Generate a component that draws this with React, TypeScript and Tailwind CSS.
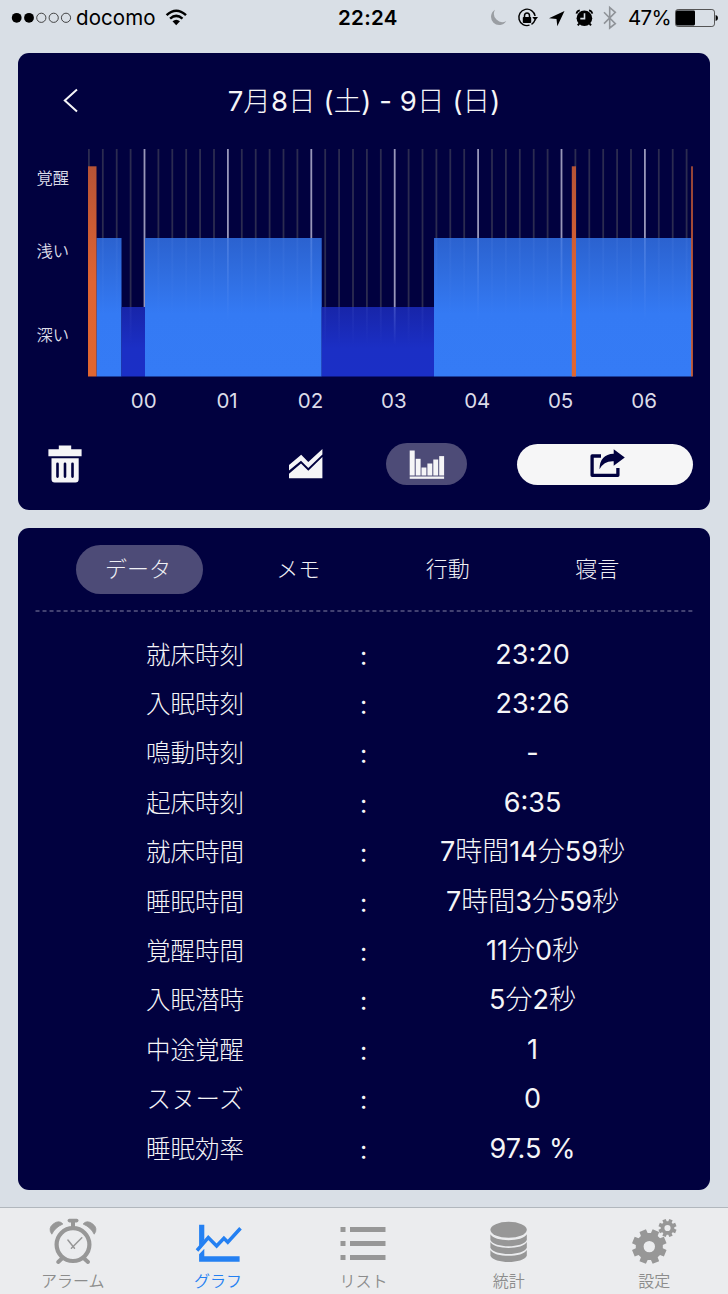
import React from "react";

const HOURS = ["00", "01", "02", "03", "04", "05", "06"];

const ROWS: [string, string][] = [
  ["就床時刻", "23:20"],
  ["入眠時刻", "23:26"],
  ["鳴動時刻", "-"],
  ["起床時刻", "6:35"],
  ["就床時間", "7時間14分59秒"],
  ["睡眠時間", "7時間3分59秒"],
  ["覚醒時間", "11分0秒"],
  ["入眠潜時", "5分2秒"],
  ["中途覚醒", "1"],
  ["スヌーズ", "0"],
  ["睡眠効率", "97.5 %"],
];

// Latin runs are set in the regular weight, Japanese runs in the light one.
function Mixed({ text }: { text: string }) {
  return (
    <>
      {text.split(/([\x20-\x7e]+)/).filter(Boolean).map((run, i) => (
        <span key={i} className={/^[\x20-\x7e]/.test(run) ? "font-normal" : "font-light"}>{run}</span>
      ))}
    </>
  );
}

function StatusBar() {
  return (
    <header className="flex h-[37px] items-center font-['Inter'] text-black">
      <svg className="mb-px ml-[10px] h-[14px] w-[62px] shrink-0" viewBox="10 11 62 14">
        <circle cx="16.7" cy="17.8" r="4.9" />
        <circle cx="29" cy="17.8" r="4.9" />
        <g fill="none" stroke="#333" strokeWidth="0.9">
          <circle cx="41.3" cy="17.8" r="4.6" />
          <circle cx="53.7" cy="17.8" r="4.6" />
          <circle cx="66" cy="17.8" r="4.6" />
        </g>
      </svg>
      <span className="ml-[4px] w-[82px] whitespace-nowrap text-[20.5px] tracking-[0.1px]">docomo</span>
      <svg className="mb-px ml-[7px] h-[18px] w-[23px] shrink-0" viewBox="165 9 23 18">
        <g fill="none" stroke="#000" strokeWidth="2.5">
          <path d="M166.6 15.1 Q176.2 6.3 186 15.1" />
          <path d="M170.1 18.6 Q176.2 13.2 182.5 18.6" />
        </g>
        <path d="M172.5 21.2 Q176.2 18.2 180 21.2 L176.2 25.2Z" />
      </svg>
      <span className="ml-[150px] w-[62px] whitespace-nowrap text-[20.5px] font-semibold tracking-[0.3px]">22:24</span>
      <svg className="mb-px ml-[87px] h-[28px] w-[131px] shrink-0" viewBox="487 4 131 28">
        <path d="M495 9.8 A8.2 8.2 0 1 0 506.3 21 A8.3 8.3 0 0 1 495 9.8Z" fill="#9a9ea3" />
        <path d="M529.5 25.2 A8.2 8.2 0 1 1 535.1 16 M535 20 A8.2 8.2 0 0 1 531.5 24.3" fill="none" stroke="#000" strokeWidth="1.4" />
        <path d="M532.3 17 H538 L535.2 20.8Z" />
        <rect x="522.8" y="17" width="8.4" height="6" rx="0.8" />
        <path d="M524.5 17.5 V15.8 a2.5 2.8 0 0 1 5 0 V17.5" fill="none" stroke="#000" strokeWidth="1.5" />
        <path d="M564.5 11 L549 18.3 L556.5 18.9 L557.3 26.2Z" />
        <circle cx="584.4" cy="18.3" r="7.8" />
        <path d="M576.5 13.6 Q577 11 579.8 10.4 M592.3 13.6 Q591.7 11 589 10.4" fill="none" stroke="#000" strokeWidth="1.8" />
        <path d="M579.3 23.5 L577.8 25.4 M589.5 23.5 L591 25.4" stroke="#000" strokeWidth="2" />
        <path d="M584.5 13.3 V18.6 H580.3" fill="none" stroke="#d9dfe6" strokeWidth="1.6" />
        <path d="M604 12.3 L615.3 23.6 L609.7 28 V7.5 L615.3 12.3 L604 23.6" fill="none" stroke="#8f9398" strokeWidth="1.6" />
      </svg>
      <span className="ml-[10px] w-[43px] whitespace-nowrap text-[20.5px] tracking-[-0.7px]">47%</span>
      <svg className="mb-px ml-[4px] h-[18px] w-[44px] shrink-0" viewBox="675 9 44 18">
        <rect x="675.5" y="9.5" width="39" height="17" rx="2.6" fill="none" stroke="#555" strokeWidth="1" />
        <rect x="676" y="10.6" width="19" height="14.8" rx="1.3" />
        <path d="M715.6 15 Q718 15.5 718 18 Q718 20.5 715.6 21Z" />
      </svg>
    </header>
  );
}

const TICKS = Array.from({ length: 44 }, (_, i) => ({
  x: 88.9 + i * 13.9,
  hour: i % 6 === 4,
}));

function SleepChart() {
  return (
    <svg className="block h-[230px] w-[606px] shrink-0" viewBox="88 148 606 230">
      <defs>
        <linearGradient id="wake" x1="0" y1="0" x2="0" y2="1">
          <stop offset="0" stopColor="#b65336" />
          <stop offset="0.55" stopColor="#df6432" />
          <stop offset="1" stopColor="#e06631" />
        </linearGradient>
        <linearGradient id="light" x1="0" y1="0" x2="0" y2="1">
          <stop offset="0" stopColor="#2b62cf" />
          <stop offset="0.55" stopColor="#347af4" />
          <stop offset="1" stopColor="#357bf5" />
        </linearGradient>
        <linearGradient id="deep" x1="0" y1="0" x2="0" y2="1">
          <stop offset="0" stopColor="#1725a9" />
          <stop offset="0.6" stopColor="#1b2fc5" />
          <stop offset="1" stopColor="#1b2fc6" />
        </linearGradient>
        <linearGradient id="fade" gradientUnits="userSpaceOnUse" x1="0" y1="238" x2="0" y2="320">
          <stop offset="0" stopColor="#8fb4ff" stopOpacity="1" />
          <stop offset="1" stopColor="#8fb4ff" stopOpacity="0" />
        </linearGradient>
        <linearGradient id="fadeDeep" gradientUnits="userSpaceOnUse" x1="0" y1="307" x2="0" y2="345">
          <stop offset="0" stopColor="#8fa4ff" stopOpacity="1" />
          <stop offset="1" stopColor="#8fa4ff" stopOpacity="0" />
        </linearGradient>
      </defs>
      {TICKS.map((t) => (
        <rect key={t.x} x={t.x - 0.9} y="149" width="1.8" height="227" fill={t.hour ? "#9897b9" : "#2c2c50"} />
      ))}
      <g fill="url(#light)">
        <rect x="96.5" y="238" width="25" height="138.5" />
        <rect x="145" y="238" width="176.7" height="138.5" />
        <rect x="434" y="238" width="257.5" height="138.5" />
      </g>
      <g fill="url(#deep)">
        <rect x="121.5" y="307" width="23.5" height="69.5" />
        <rect x="321.7" y="307" width="112.3" height="69.5" />
      </g>
      {TICKS.map((t) => {
        const deep = (t.x > 122 && t.x < 144) || (t.x > 322 && t.x < 433);
        if (t.x < 97 || Math.abs(t.x - 144.5) < 1) return null;
        return (
          <rect
            key={t.x}
            x={t.x - 0.9}
            y={deep ? 307 : 238}
            width="1.8"
            height={deep ? 38 : 82}
            fill={deep ? "url(#fadeDeep)" : "url(#fade)"}
            opacity={t.hour ? 0.3 : 0.08}
          />
        );
      })}
      <g fill="url(#wake)">
        <rect x="88" y="166.3" width="8.5" height="210.2" />
        <rect x="571.8" y="166.3" width="4.2" height="210.2" />
        <rect x="691.2" y="166.3" width="1.6" height="210.2" />
      </g>
    </svg>
  );
}

function gear(cx: number, cy: number, outer: number, inner: number, hole: number) {
  const pts: string[] = [];
  for (let i = 0; i < 8; i++) {
    const mid = (i * Math.PI) / 4 + Math.PI / 8;
    [
      [-0.27, inner],
      [-0.2, outer],
      [0.2, outer],
      [0.27, inner],
    ].forEach(([a, r]) => {
      pts.push(`${(cx + r * Math.cos(mid + a)).toFixed(2)} ${(cy + r * Math.sin(mid + a)).toFixed(2)}`);
    });
  }
  return `M${pts.join("L")}ZM${cx - hole} ${cy}a${hole} ${hole} 0 1 0 ${2 * hole} 0a${hole} ${hole} 0 1 0 ${-2 * hole} 0Z`;
}

const TABS = [
  {
    label: "アラーム",
    icon: (
      <svg className="h-[50px] w-[50px]" viewBox="47.8 1216 50 50">
        <g fill="none" stroke="#979797" strokeLinecap="round">
          <circle cx="72.8" cy="1244.6" r="16.4" strokeWidth="4.2" />
          <path d="M67.7 1240 L74.3 1248.2 M81.6 1237.7 L71.2 1248.2" strokeWidth="1.5" />
          <path d="M61.5 1258.8 L58 1262 M84.2 1258.8 L87.8 1262" strokeWidth="4" />
          <path d="M69.2 1220.6 H76.5" strokeWidth="3.6" />
          <path d="M72.8 1221 V1227" strokeWidth="4" strokeLinecap="butt" />
        </g>
        <path d="M51.6 1234.2 Q47.4 1228.5 53.2 1223.8 Q59 1219.6 62.7 1224 Q54.8 1227.5 51.6 1234.2Z M94 1234.2 Q98.2 1228.5 92.4 1223.8 Q86.6 1219.6 82.9 1224 Q90.8 1227.5 94 1234.2Z" fill="#979797" stroke="#979797" strokeWidth="0.8" strokeLinejoin="round" />
      </svg>
    ),
  },
  {
    label: "グラフ",
    active: true,
    icon: (
      <svg className="h-[50px] w-[50px]" viewBox="193.2 1216 50 50">
        <path d="M199.3 1224.7 H204.5 V1240 L199.3 1246Z M199.3 1254.3 L204.5 1248.8 V1256.2 H239.8 V1261.7 H199.3Z" fill="#2480f2" />
        <path d="M197.2 1250.5 L208.5 1237.6 L216.8 1246 L224.1 1238.2 L228 1242.2 L240.7 1228.2" fill="none" stroke="#2480f2" strokeWidth="3.5" />
      </svg>
    ),
  },
  {
    label: "リスト",
    icon: (
      <svg className="h-[50px] w-[50px]" viewBox="338.5 1216 50 50" fill="#979797">
        {[1227, 1241, 1255].map((y) => (
          <g key={y}>
            <rect x="341" y={y} width="5" height="5" />
            <rect x="350.5" y={y} width="35.5" height="5" />
          </g>
        ))}
      </svg>
    ),
  },
  {
    label: "統計",
    icon: (
      <svg className="h-[50px] w-[50px]" viewBox="484 1216 50 50" fill="#979797">
        <ellipse cx="508.6" cy="1229.8" rx="18.2" ry="8" />
        {[1234.3, 1242.1, 1250].map((y) => (
          <path key={y} d={`M490.4 ${y} C494 ${y + 7.8} 523.2 ${y + 7.8} 526.8 ${y} V${y + 5.7} C523.2 ${y + 14} 494 ${y + 14} 490.4 ${y + 5.7}Z`} />
        ))}
      </svg>
    ),
  },
  {
    label: "設定",
    icon: (
      <svg className="h-[50px] w-[50px]" viewBox="629.3 1216 50 50" fill="#979797" fillRule="evenodd">
        <path d={gear(649.6, 1246.6, 17.6, 13.6, 5.7)} />
        <path d={gear(667.8, 1228, 9.2, 6.8, 3.1)} />
      </svg>
    ),
  },
];

export default function App() {
  return (
    <div className="flex h-[1294px] w-[728px] flex-col overflow-hidden bg-[#d9dfe6] font-['Inter','Noto_Sans_CJK_JP',sans-serif] text-[#f5f5f7]">
      <StatusBar />

      <section className="mx-[18px] mt-[16px] h-[457px] shrink-0 rounded-[11px] bg-[#01013f]">
        <div className="grid h-[95px] grid-cols-[80px_1fr_80px] items-center">
          <svg className="ml-[43px] h-[26px] w-[20px]" viewBox="61 88 20 26">
            <path d="M77 89.5 L64.8 100.5 L77 111.5" fill="none" stroke="#f5f5f7" strokeWidth="2" />
          </svg>
          <h1 className="whitespace-nowrap pt-px text-center text-[27.5px] leading-[40px] tracking-[0.1px]">
            <Mixed text="7月8日 (土) - 9日 (日)" />
          </h1>
        </div>
        <div className="flex">
          <div className="flex w-[70px] flex-col pl-[18.5px] text-[16.3px] font-[350] leading-[24px] text-[#dcdce8]">
            <span className="mt-[18px]">覚醒</span>
            <span className="mt-[49px]">浅い</span>
            <span className="mt-[60px]">深い</span>
          </div>
          <SleepChart />
        </div>
        <div className="ml-[84px] flex pt-[8px] text-[20.5px] leading-[30px] text-[#dcdce8]">
          {HOURS.map((h) => (
            <span key={h} className="w-[83.4px] text-center font-normal">{h}</span>
          ))}
        </div>
        <div className="mt-[27px] flex h-[42px] items-center">
          <svg className="ml-[29px] h-[40px] w-[36px]" viewBox="47 444 36 40">
            <path d="M58.8 445.4 H71.2 V449.2 H81.6 V456.3 H48.4 V449.2 H58.8Z" fill="#f5f5f7" />
            <path d="M51.5 458.3 H78.7 V479 Q78.7 482.5 75.5 482.5 H54.7 Q51.5 482.5 51.5 479Z" fill="#f5f5f7" />
            <path d="M57.5 463.8 V476.6 M65 463.8 V476.6 M72.5 463.8 V476.6" stroke="#01013f" strokeWidth="2.6" strokeLinecap="round" />
          </svg>
          <svg className="ml-[205px] h-[32px] w-[36px]" viewBox="288 448 36 32" fill="#f5f5f7">
            <path d="M289 465 L301.2 454.8 L308.3 462 L322.4 449 V454.5 L308.3 468 L301 460.7 L289 470.5Z" />
            <path d="M289 473.8 L301 463.5 L308.3 470.8 L322.4 457 V478.2 H289Z" />
          </svg>
          <div className="ml-[62px] flex h-[42px] w-[81px] items-center justify-center rounded-full bg-[#4d4b77]">
            <svg className="h-[30px] w-[36px]" viewBox="408.5 449.5 36 30" fill="#f5f5f7">
              <rect x="409.2" y="451" width="5" height="25" />
              <rect x="415.2" y="459.3" width="4.9" height="16.7" />
              <rect x="421" y="468" width="4.9" height="8" />
              <rect x="426.9" y="464" width="4.9" height="12" />
              <rect x="432.8" y="460" width="4.9" height="16" />
              <rect x="438.7" y="456.6" width="4.9" height="19.4" />
              <rect x="409.2" y="477" width="34.4" height="2.3" />
            </svg>
          </div>
          <div className="ml-[50px] flex h-[41px] w-[176px] items-center justify-center rounded-full bg-[#f6f6f7]">
            <svg className="ml-[4px] h-[30px] w-[36px]" viewBox="589.5 449.5 36 30">
              <path d="M601.5 456.5 H592.6 V475.8 H618.4 V468.5" fill="none" stroke="#01013f" strokeWidth="3.3" strokeLinejoin="round" />
              <path d="M614.2 449.8 L625.3 458 L614.2 466.3 V461.8 Q604.5 461.2 600 469.8 Q600.2 454.8 614.2 454.3Z" fill="#01013f" />
            </svg>
          </div>
        </div>
      </section>

      <section className="mx-[18px] mt-[18px] h-[662px] shrink-0 rounded-[11px] bg-[#01013f] pt-[17px]">
        <nav className="ml-[58px] flex h-[49px] text-[22px] font-light leading-[48px] text-[#f0f0f5]">
          <span className="w-[127px] rounded-full bg-[#4d4b77] pr-[3px] text-center">データ</span>
          <span className="ml-[20.5px] w-[149.5px] text-center">メモ</span>
          <span className="w-[149.5px] text-center">行動</span>
          <span className="w-[149.5px] text-center">寝言</span>
        </nav>
        <svg className="ml-[17px] mt-[16px] block h-[2px] w-[658px]" viewBox="0 0 658 2">
          <path d="M0.5 1 H658" stroke="#8482a3" strokeWidth="1.1" strokeDasharray="4 3.02" />
        </svg>
        <dl className="mt-[18px]">
          {ROWS.map(([label, value]) => (
            <div key={label} className="flex h-[49.4px] items-center pl-[93px] leading-[48px]">
              <dt className="w-[168px] whitespace-nowrap text-center text-[24.5px] font-light">{label}</dt>
              <span className="ml-[42px] w-[85px] pt-[2px] text-center text-[25px] font-normal">:</span>
              <dd className="w-[253px] whitespace-nowrap text-center text-[27px]">
                <Mixed text={value} />
              </dd>
            </div>
          ))}
        </dl>
      </section>

      <nav className="mt-[17px] flex h-[87px] shrink-0 border-t border-[#b1b7bd] bg-[#ebecee]">
        {TABS.map((t) => (
          <div key={t.label} className="flex w-[145.4px] flex-col items-center pt-[8px]">
            {t.icon}
            <span className={t.active ? "mt-[3px] text-[16px] font-[350] leading-[24px] text-[#2480f2]" : "mt-[3px] text-[16px] font-[350] leading-[24px] text-[#8c8c8c]"}>{t.label}</span>
          </div>
        ))}
      </nav>
    </div>
  );
}
